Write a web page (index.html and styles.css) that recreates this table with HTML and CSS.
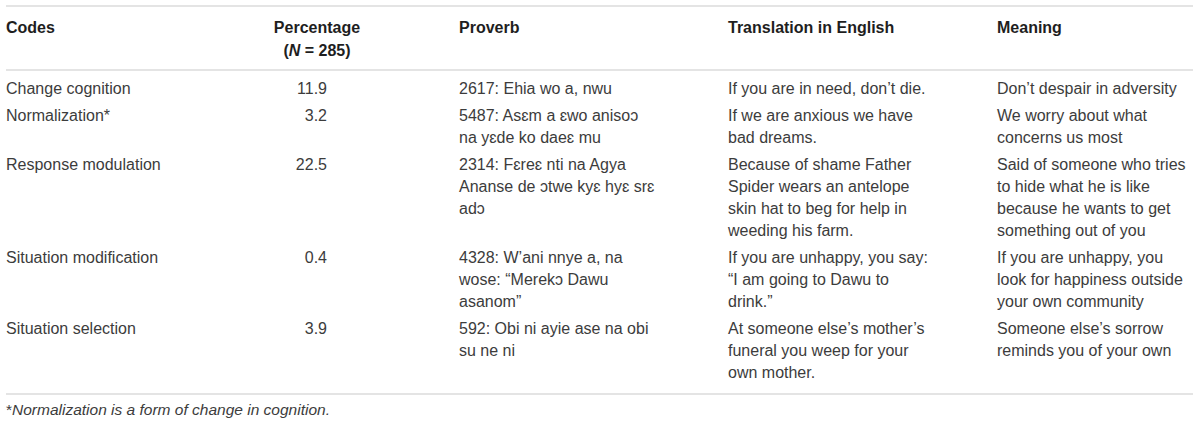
FILE: index.html
```html
<!DOCTYPE html>
<html lang="en">
<head>
<meta charset="utf-8">
<title>Proverb codes</title>
<link rel="stylesheet" href="styles.css">
</head>
<body>
<div class="page">
  <table class="codes-table">
    <colgroup>
      <col class="c-codes">
      <col class="c-pct">
      <col class="c-prov">
      <col class="c-trans">
      <col class="c-mean">
    </colgroup>
    <thead>
      <tr>
        <th>Codes</th>
        <th class="pct-head">Percentage<br>(<i>N</i> = 285)</th>
        <th>Proverb</th>
        <th>Translation in English</th>
        <th>Meaning</th>
      </tr>
    </thead>
    <tbody>
      <tr>
        <td>Change cognition</td>
        <td class="num">11.9</td>
        <td class="prov">2617: Ehia wo a, nwu</td>
        <td class="trans">If you are in need, don’t die.</td>
        <td class="mean">Don’t despair in adversity</td>
      </tr>
      <tr>
        <td>Normalization*</td>
        <td class="num">3.2</td>
        <td class="prov">5487: Asɛm a ɛwo anisoɔ na&nbsp;yɛde ko daeɛ mu</td>
        <td class="trans">If we are anxious we have bad dreams.</td>
        <td class="mean">We worry about what concerns us most</td>
      </tr>
      <tr>
        <td>Response modulation</td>
        <td class="num">22.5</td>
        <td class="prov">2314: Fɛreɛ nti na Agya Ananse de ɔtwe kyɛ hyɛ srɛ adɔ</td>
        <td class="trans">Because of shame Father Spider wears an antelope skin hat to beg for help in weeding his farm.</td>
        <td class="mean">Said of someone who tries to hide what he is like because he wants to get something out of you</td>
      </tr>
      <tr>
        <td>Situation modification</td>
        <td class="num">0.4</td>
        <td class="prov">4328: W’ani nnye a, na wose: “Merekɔ Dawu asanom”</td>
        <td class="trans">If you are unhappy, you say: “I am going to Dawu to drink.”</td>
        <td class="mean">If you are unhappy, you look for happiness outside your own community</td>
      </tr>
      <tr>
        <td>Situation selection</td>
        <td class="num">3.9</td>
        <td class="prov">592: Obi ni ayie ase na obi su ne ni</td>
        <td class="trans">At someone else’s mother’s funeral you weep for your own mother.</td>
        <td class="mean">Someone else’s sorrow reminds you of your own</td>
      </tr>
    </tbody>
  </table>
  <p class="footnote">*<i>Normalization is a form of change in cognition.</i></p>
</div>
</body>
</html>
```

FILE: styles.css
```css
html, body {
  margin: 0;
  padding: 0;
  background: #ffffff;
}

body {
  font-family: "Liberation Sans", Arial, Helvetica, sans-serif;
  font-size: 16px;
  color: #3c3c3c;
}

.page {
  padding: 5px 7px 0 6px;
}

.codes-table {
  width: 1187px;
  border-collapse: collapse;
  table-layout: fixed;
  border-top: 2px solid #e4e4e4;
  border-bottom: 2px solid #e4e4e4;
}

.c-codes { width: 244px; }
.c-pct { width: 209px; }
.c-prov { width: 269px; }
.c-trans { width: 269px; }
.c-mean { width: 196px; }

.codes-table th {
  font-weight: bold;
  color: #1e1e1e;
  text-align: left;
  vertical-align: top;
  line-height: 23px;
  padding: 9px 0 7px 0;
  border-bottom: 2px solid #e4e4e4;
}

.codes-table th.pct-head {
  text-align: center;
  padding-right: 75px;
}

.codes-table td {
  vertical-align: top;
  line-height: 22px;
  padding: 2.5px 0;
}

.codes-table tbody tr:first-child td {
  padding-top: 7px;
}

.codes-table tbody tr:last-child td {
  padding-bottom: 9px;
}

.codes-table td.num {
  text-align: right;
  padding-right: 132px;
}

.codes-table td.prov {
  padding-right: 64px;
}

.codes-table td.trans {
  padding-right: 64px;
}

.codes-table td.mean {
  padding-right: 4px;
}

.footnote {
  margin: 5px 0 0 0;
  font-size: 15.5px;
  line-height: 20px;
  color: #3c3c3c;
}
```
